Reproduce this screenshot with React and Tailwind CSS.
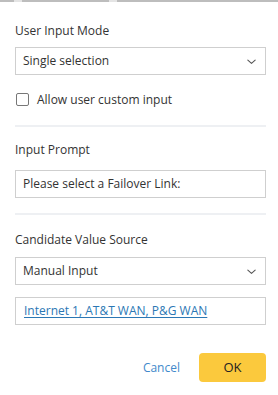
import React from "react";

function Chevron() {
  return (
    <svg className="w-[11px] h-[11px] text-[#555]" viewBox="0 0 12 12" fill="none" stroke="currentColor">
      <path d="M2 4.5l4 3.5 4-3.5" strokeWidth={1.2} strokeLinecap="round" strokeLinejoin="round" />
    </svg>
  );
}

function SelectBox({ value }) {
  return (
    <div className="h-[28px] border border-[#cfcfcf] bg-white flex items-center justify-between pl-[7px] pr-[8px]">
      <span>{value}</span>
      <Chevron />
    </div>
  );
}

export default function App() {
  return (
    <div
      className="w-[278px] h-[395px] bg-white text-[12px] text-[#333] flex flex-col"
      style={{ fontFamily: '"Open Sans", sans-serif' }}
    >
      <div className="flex h-[2px] shrink-0">
        <div className="w-[14px] bg-[#bdbdbd]" />
        <div className="w-[8px] bg-[#e4e4e4]" />
        <div className="w-[87px] bg-[#bdbdbd]" />
        <div className="w-[8px] bg-[#e4e4e4]" />
        <div className="flex-1 bg-[#bdbdbd]" />
      </div>

      <div className="pl-[15px] pr-[12px] flex flex-col">
        <div className="mt-[20px] leading-[17px]">User Input Mode</div>
        <div className="mt-[8px]">
          <SelectBox value="Single selection" />
        </div>
        <label className="mt-[16px] flex items-center gap-[8px] leading-[17px]">
          <span className="w-[13px] h-[13px] ml-[1px] border border-[#777] rounded-[2px] bg-white" />
          <span>Allow user custom input</span>
        </label>

        <div className="mt-[17px] h-[2px] bg-[#eef0f3]" />

        <div className="mt-[14px] leading-[17px]">Input Prompt</div>
        <div className="mt-[12px] h-[28px] border border-[#cfcfcf] flex items-center pl-[7px]">
          Please select a Failover Link:
        </div>

        <div className="mt-[15px] h-[2px] bg-[#eef0f3]" />

        <div className="mt-[16px] leading-[17px]">Candidate Value Source</div>
        <div className="mt-[9px]">
          <SelectBox value="Manual Input" />
        </div>
        <div className="mt-[12px] h-[28px] border border-[#cfcfcf] flex items-center pl-[8px]">
          <span className="text-[#2b77b4] underline underline-offset-2">Internet 1, AT&amp;T WAN, P&amp;G WAN</span>
        </div>

        <div className="mt-[28px] flex items-center justify-end gap-[19px]">
          <button className="text-[#4189cb] leading-[17px]">Cancel</button>
          <button className="w-[67px] h-[29px] rounded-[4px] bg-[#fbc93d] text-[#222] text-[13px]">OK</button>
        </div>
      </div>
    </div>
  );
}
